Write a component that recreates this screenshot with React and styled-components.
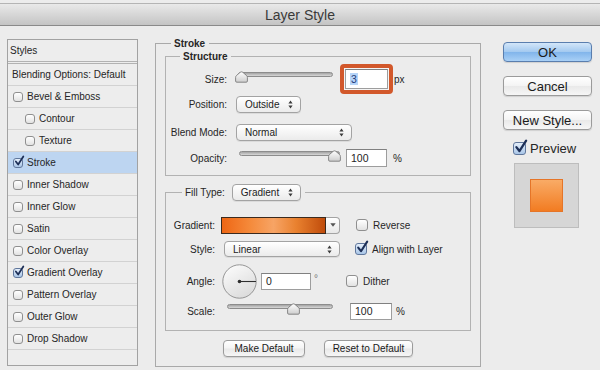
import React from 'react';
import styled, { createGlobalStyle } from 'styled-components';

const Global = createGlobalStyle`
  html, body { margin: 0; padding: 0; background: #ececec; }
  #root { width: 600px; height: 370px; overflow: hidden; }
  * { box-sizing: border-box; }
`;

const Window = styled.div`
  width: 600px;
  height: 370px;
  background: #ececec;
  display: flex;
  flex-direction: column;
  font-family: "Liberation Sans", Arial, sans-serif;
  font-size: 10px;
  color: #262626;
`;

const TitleBar = styled.div`
  flex: none;
  margin-top: 3px;
  height: 23px;
  border-top: 1px solid #b4b4b4;
  border-bottom: 1px solid #8a8a8a;
  background: linear-gradient(#e9e9e9, #c4c4c4);
  display: flex;
  align-items: center;
  justify-content: center;
  font-size: 14px;
  color: #3a3a3a;
`;

const Body = styled.div`
  flex: 1;
  display: flex;
  align-items: flex-start;
`;

/* ---------- left list ---------- */
const StyleList = styled.div`
  flex: none;
  margin: 13px 0 0 7px;
  width: 131px;
  height: 327px;
  border: 1px solid #a2a2a2;
  background: #ededed;
  display: flex;
  flex-direction: column;
`;

const ListHead = styled.div`
  height: 24px;
  padding-left: ${p => p.$pl}px;
  border-bottom: 3px double #b2b2b2;
  display: flex;
  align-items: center;
`;

const ListRow = styled.div`
  height: 22px;
  flex: none;
  padding-left: ${p => p.$pl}px;
  border-bottom: 1px solid #d2d2d2;
  background: ${p => (p.$sel ? '#bdd5f1' : 'transparent')};
  display: flex;
  align-items: center;
  gap: 4px;
`;

/* ---------- checkbox ---------- */
const Box = styled.span`
  position: relative;
  flex: none;
  display: inline-block;
  width: ${p => p.$s}px;
  height: ${p => p.$s}px;
  border-radius: 3px;
  border: 1px solid ${p => (p.$on ? '#60779c' : '#8f8f8f')};
  background: ${p =>
    p.$on ? 'linear-gradient(#e4eefa, #a9c6e8)' : 'linear-gradient(#ffffff, #e2e2e2)'};
`;

const CheckMark = styled.svg`
  position: absolute;
  left: 0px;
  top: -3px;
  overflow: visible;
`;

const Check = ({ s = 12, on }) => (
  <Box $s={s} $on={on}>
    {on && (
      <CheckMark width={s} height={s} viewBox="0 0 12 12">
        <path d="M2.2 6.6 L5 10.2 L11.2 0.6" fill="none" stroke="#1d2f57" strokeWidth="2.1" strokeLinecap="round" strokeLinejoin="round" />
      </CheckMark>
    )}
  </Box>
);

/* ---------- group boxes ---------- */
const Group = styled.fieldset`
  margin: ${p => p.$m || '0'};
  padding: ${p => p.$p || '0'};
  border: 1px solid ${p => p.$bc || '#a9a9a9'};
  width: ${p => (p.$w ? `${p.$w}px` : 'auto')};
  height: ${p => (p.$h ? `${p.$h}px` : 'auto')};
  flex: none;
  min-width: 0;
  display: flex;
  flex-direction: column;
`;

const Legend = styled.legend`
  margin-left: ${p => p.$ml}px;
  padding: 0 4px 0 3px;
  font-weight: ${p => (p.$bold ? 700 : 400)};
  line-height: 13px;
  display: flex;
  align-items: center;
`;

const Row = styled.div`
  flex: none;
  display: flex;
  align-items: center;
  height: ${p => p.$h}px;
  margin-top: ${p => p.$mt || 0}px;
`;

const Label = styled.span`
  flex: none;
  width: ${p => p.$w}px;
  margin-right: ${p => p.$mr}px;
  text-align: right;
`;

const Unit = styled.span`
  flex: none;
  margin-left: ${p => p.$ml}px;
  color: ${p => p.$c || '#262626'};
  align-self: ${p => (p.$top ? 'flex-start' : 'center')};
  margin-top: ${p => p.$mt || 0}px;
  padding-left: ${p => p.$pl || 0}px;
  width: ${p => (p.$w ? `${p.$w}px` : 'auto')};
`;

/* ---------- controls ---------- */
const SliderWrap = styled.div`
  position: relative;
  flex: none;
  width: ${p => p.$w}px;
  height: 14px;
  margin-left: ${p => p.$ml || 0}px;
`;

const Track = styled.div`
  height: 5px;
  border-radius: 3px;
  border: 1px solid #8c8c8c;
  background: linear-gradient(#a4a4a4, #d8d8d8);
`;

const ThumbSvg = styled.svg`
  position: absolute;
  top: -1px;
`;

const Slider = ({ w, ml, x }) => (
  <SliderWrap $w={w} $ml={ml}>
    <Track />
    <ThumbSvg width="13" height="12" viewBox="0 0 13 12" style={{ left: x }}>
      <defs>
        <linearGradient id="thg" x1="0" y1="0" x2="0" y2="1">
          <stop offset="0" stopColor="#ffffff" />
          <stop offset="1" stopColor="#cdcdcd" />
        </linearGradient>
      </defs>
      <path d="M1.8 11.2 Q0.6 11.2 0.6 10 V6.4 Q0.6 5.2 1.6 4.4 L5.2 1.3 Q6.5 0.3 7.8 1.3 L11.4 4.4 Q12.4 5.2 12.4 6.4 V10 Q12.4 11.2 11.2 11.2 Z" fill="url(#thg)" stroke="#7c7c7c" strokeWidth="0.9" />
    </ThumbSvg>
  </SliderWrap>
);

const Field = styled.div`
  flex: none;
  width: ${p => p.$w}px;
  height: ${p => p.$h}px;
  margin-left: ${p => p.$ml || 0}px;
  background: #fff;
  border: 1px solid #9d9d9d;
  border-top-color: #808080;
  padding-left: 4px;
  display: flex;
  align-items: center;
  font-size: 10.5px;
  color: #1e1e1e;
`;

const Ring = styled.div`
  flex: none;
  margin-left: ${p => p.$ml}px;
  border: 4px solid #d2582b;
  border-radius: 4px;
  padding: 1px;
  background: #f4f4f4;
`;

const Selected = styled.span`
  background: #b6d4f8;
  color: #1f3c7a;
  padding: 0 1px;
`;

const SelectBox = styled.div`
  flex: none;
  width: ${p => p.$w}px;
  height: ${p => p.$h || 17}px;
  margin-left: ${p => p.$ml || 0}px;
  border: 1px solid #a3a3a3;
  border-radius: 4px;
  background: linear-gradient(#ffffff, #ebebeb);
  box-shadow: 0 1px 0 rgba(0, 0, 0, 0.07);
  display: flex;
  align-items: center;
  justify-content: space-between;
  padding: 0 7px 0 8px;
  color: #222;
`;

const Arrows = () => (
  <svg width="5" height="9" viewBox="0 0 5 9">
    <path d="M2.5 0.5 L4.6 3.4 H0.4 Z M2.5 8.5 L4.6 5.6 H0.4 Z" fill="#3d3d3d" />
  </svg>
);

const Select = ({ w, h, ml, children }) => (
  <SelectBox $w={w} $h={h} $ml={ml}>
    <span>{children}</span>
    <Arrows />
  </SelectBox>
);

const Swatch = styled.div`
  flex: none;
  width: 105px;
  height: 17px;
  border: 1px solid #3b2a1e;
  background: linear-gradient(90deg, #ee6614 0%, #f58b3c 28%, #f7a465 50%, #e9812f 72%, #c04c0b 100%);
`;

const SwatchBtn = styled.div`
  flex: none;
  width: 14px;
  height: 17px;
  border: 1px solid #a3a3a3;
  border-left: none;
  border-radius: 0 4px 4px 0;
  background: linear-gradient(#ffffff, #e8e8e8);
  display: flex;
  align-items: center;
  justify-content: center;
`;

const CheckOpt = styled.div`
  flex: none;
  display: flex;
  align-items: center;
  gap: 5px;
  margin-left: ${p => p.$ml}px;
  font-size: ${p => p.$fs || 10}px;
`;

const DialSvg = styled.svg`
  flex: none;
  margin-left: ${p => p.$ml}px;
`;

const Dial = () => (
  <DialSvg $ml={1} width="35" height="35" viewBox="0 0 35 35">
    <defs>
      <linearGradient id="dg" x1="0" y1="0" x2="0.6" y2="1">
        <stop offset="0" stopColor="#fefefe" />
        <stop offset="1" stopColor="#dcdcdc" />
      </linearGradient>
    </defs>
    <circle cx="17.5" cy="17.5" r="16.7" fill="url(#dg)" stroke="#8b8b8b" strokeWidth="0.9" />
    <line x1="17.5" y1="17.5" x2="34" y2="17.5" stroke="#2e2e2e" strokeWidth="1.1" />
    <circle cx="17.5" cy="17.5" r="1.8" fill="#2e2e2e" />
  </DialSvg>
);

const ButtonRow = styled.div`
  flex: none;
  margin-top: 9px;
  display: flex;
  justify-content: center;
  gap: 19px;
`;

const PushButton = styled.div`
  flex: none;
  width: ${p => p.$w}px;
  height: ${p => p.$h}px;
  margin-top: ${p => p.$mt || 0}px;
  border-radius: 4px;
  border: 1px solid ${p => (p.$primary ? '#5a7eae' : '#9b9b9b')};
  background: ${p =>
    p.$primary
      ? 'linear-gradient(#d3e6f9 0%, #a4caf0 48%, #82b5eb 52%, #a9d0f6 100%)'
      : 'linear-gradient(#ffffff 0%, #f4f4f4 48%, #e9e9e9 52%, #f6f6f6 100%)'};
  box-shadow: 0 1px 1px rgba(0, 0, 0, 0.12);
  display: flex;
  align-items: center;
  justify-content: center;
  font-size: ${p => p.$fs}px;
  color: #1a1a1a;
`;

/* ---------- right column ---------- */
const Side = styled.div`
  flex: none;
  margin: 16px 0 0 22px;
  width: 89px;
  display: flex;
  flex-direction: column;
`;

const PreviewToggle = styled.div`
  margin: 11px 0 0 10px;
  height: 14px;
  display: flex;
  align-items: center;
  gap: 4px;
  font-size: 13px;
`;

const PreviewPane = styled.div`
  margin: 8px 0 0 11px;
  width: 65px;
  height: 65px;
  background: #d6d6d6;
  border: 1px solid #bdbdbd;
  display: flex;
  align-items: center;
  justify-content: center;
`;

const PreviewSquare = styled.div`
  width: 33px;
  height: 33px;
  border: 1px solid #e57528;
  background: linear-gradient(#f9ab66, #f27c22);
`;

const listItems = [
  { t: 'Bevel & Emboss', lv: 0 },
  { t: 'Contour', lv: 1 },
  { t: 'Texture', lv: 1 },
  { t: 'Stroke', lv: 0, on: true, sel: true },
  { t: 'Inner Shadow', lv: 0 },
  { t: 'Inner Glow', lv: 0 },
  { t: 'Satin', lv: 0 },
  { t: 'Color Overlay', lv: 0 },
  { t: 'Gradient Overlay', lv: 0, on: true },
  { t: 'Pattern Overlay', lv: 0 },
  { t: 'Outer Glow', lv: 0 },
  { t: 'Drop Shadow', lv: 0 },
];

export default function App() {
  return (
    <Window>
      <Global />
      <TitleBar>Layer Style</TitleBar>
      <Body>
        <StyleList>
          <ListHead $pl={2}>Styles</ListHead>
          <ListRow $pl={4}>Blending Options: Default</ListRow>
          {listItems.map(it => (
            <ListRow key={it.t} $pl={it.lv ? 17 : 5} $sel={it.sel}>
              <Check s={10} on={it.on} />
              {it.t}
            </ListRow>
          ))}
        </StyleList>

        <Group $m="11px 0 0 17px" $p="0 9px" $w={326} $h={330}>
          <Legend $ml={6} $bold>Stroke</Legend>

          <Group $p="1px 0 7px" $bc="#b2b2b2">
            <Legend $ml={14} $bold>Structure</Legend>
            <Row $h={30}>
              <Label $w={61} $mr={9}>Size:</Label>
              <Slider w={95} ml={2} x={-3} />
              <Ring $ml={7}>
                <Field $w={43} $h={20}>
                  <Selected>3</Selected>
                </Field>
              </Ring>
              <Unit $ml={1}>px</Unit>
            </Row>
            <Row $h={20}>
              <Label $w={61} $mr={9}>Position:</Label>
              <Select w={65}>Outside</Select>
            </Row>
            <Row $h={20} $mt={8}>
              <Label $w={61} $mr={9}>Blend Mode:</Label>
              <Select w={116}>Normal</Select>
            </Row>
            <Row $h={20} $mt={6}>
              <Label $w={61} $mr={9}>Opacity:</Label>
              <Slider w={101} ml={3} x={89} />
              <Field $w={41} $h={18} $ml={6}>100</Field>
              <Unit $ml={6}>%</Unit>
            </Row>
          </Group>

          <Group $m="8px 0 0" $p="0 0 9px" $bc="#b2b2b2">
            <Legend $ml={16}>
              Fill Type:
              <Select w={69} ml={7}>Gradient</Select>
            </Legend>
            <Row $h={20} $mt={14}>
              <Label $w={49} $mr={6}>Gradient:</Label>
              <Swatch />
              <SwatchBtn>
                <svg width="6" height="4" viewBox="0 0 6 4">
                  <path d="M0.3 0.3 H5.7 L3 3.7 Z" fill="#555" />
                </svg>
              </SwatchBtn>
              <CheckOpt $ml={16}>
                <Check s={12} />
                Reverse
              </CheckOpt>
            </Row>
            <Row $h={20} $mt={4}>
              <Label $w={49} $mr={6}>Style:</Label>
              <Select w={116} h={16} ml={3}>Linear</Select>
              <CheckOpt $ml={15}>
                <Check s={12} on />
                Align with Layer
              </CheckOpt>
            </Row>
            <Row $h={36} $mt={4}>
              <Label $w={49} $mr={6}>Angle:</Label>
              <Dial />
              <Field $w={50} $h={17} $ml={4}>0</Field>
              <Unit $ml={0} $pl={3} $w={35} $c="#777" $top $mt={10}>°</Unit>
              <CheckOpt $ml={0}>
                <Check s={12} />
                Dither
              </CheckOpt>
            </Row>
            <Row $h={20} $mt={2}>
              <Label $w={49} $mr={6}>Scale:</Label>
              <Slider w={106} ml={6} x={60} />
              <Field $w={42} $h={17} $ml={17}>100</Field>
              <Unit $ml={4}>%</Unit>
            </Row>
          </Group>

          <ButtonRow>
            <PushButton $w={82} $h={17} $fs={10}>Make Default</PushButton>
            <PushButton $w={89} $h={17} $fs={10}>Reset to Default</PushButton>
          </ButtonRow>
        </Group>

        <Side>
          <PushButton $primary $w={89} $h={20} $fs={13}>OK</PushButton>
          <PushButton $w={89} $h={20} $fs={13} $mt={14}>Cancel</PushButton>
          <PushButton $w={89} $h={20} $fs={13} $mt={14}>New Style...</PushButton>
          <PreviewToggle>
            <Check s={13} on />
            Preview
          </PreviewToggle>
          <PreviewPane>
            <PreviewSquare />
          </PreviewPane>
        </Side>
      </Body>
    </Window>
  );
}
